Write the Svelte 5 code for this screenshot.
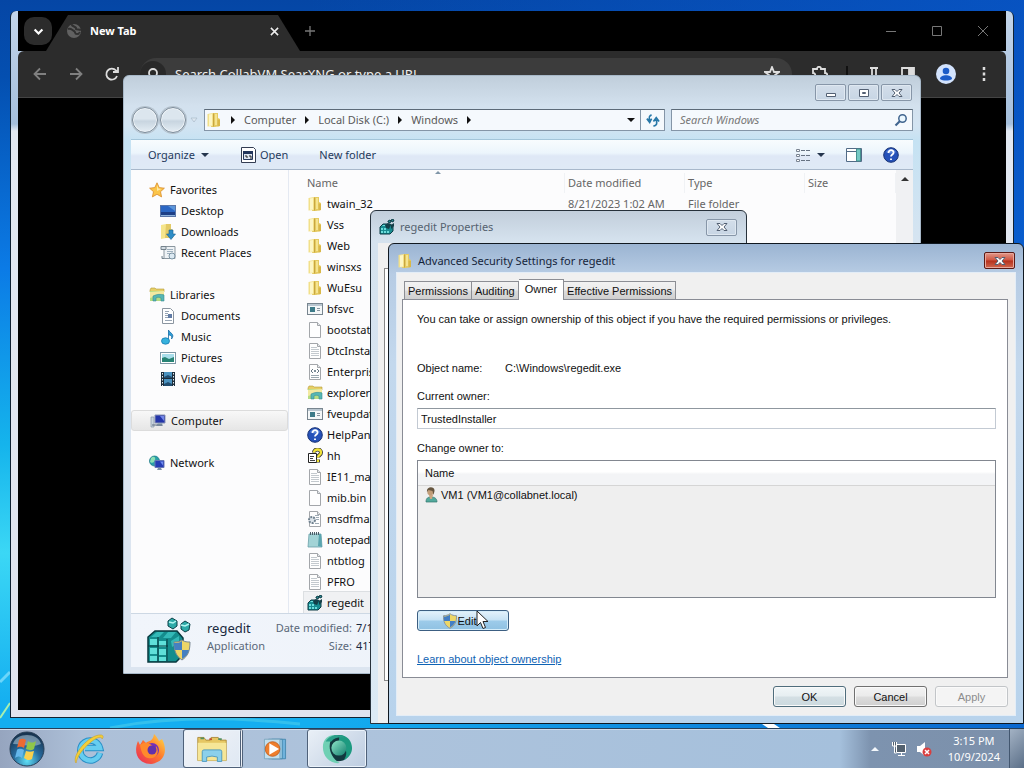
<script>
    let address = '';
    let search = '';
    let owner = 'TrustedInstaller';

    const crumbs = ['Computer', 'Local Disk (C:)', 'Windows'];

    const navGroups = [
        { name: 'Favorites', icon: 'star', items: [
            { name: 'Desktop', icon: 'desktop' },
            { name: 'Downloads', icon: 'downloads' },
            { name: 'Recent Places', icon: 'recent' }
        ]},
        { name: 'Libraries', icon: 'library', items: [
            { name: 'Documents', icon: 'document' },
            { name: 'Music', icon: 'music' },
            { name: 'Pictures', icon: 'pictures' },
            { name: 'Videos', icon: 'videos' }
        ]},
        { name: 'Computer', icon: 'computer', items: [], selected: true },
        { name: 'Network', icon: 'network', items: [] }
    ];

    const files = [
        { name: 'twain_32', icon: 'folder', date: '8/21/2023 1:02 AM', type: 'File folder' },
        { name: 'Vss', icon: 'folder' },
        { name: 'Web', icon: 'folder' },
        { name: 'winsxs', icon: 'folder' },
        { name: 'WuEsu', icon: 'folder' },
        { name: 'bfsvc', icon: 'app' },
        { name: 'bootstat', icon: 'blank' },
        { name: 'DtcInstall', icon: 'text' },
        { name: 'Enterprise', icon: 'xml' },
        { name: 'explorer', icon: 'library' },
        { name: 'fveupdate', icon: 'app' },
        { name: 'HelpPane', icon: 'help' },
        { name: 'hh', icon: 'hh' },
        { name: 'IE11_main', icon: 'text' },
        { name: 'mib.bin', icon: 'blank' },
        { name: 'msdfmap', icon: 'ini' },
        { name: 'notepad', icon: 'notepad' },
        { name: 'ntbtlog', icon: 'text' },
        { name: 'PFRO', icon: 'text' },
        { name: 'regedit', icon: 'regedit', selected: true }
    ];

    const tabs = ['Permissions', 'Auditing', 'Owner', 'Effective Permissions'];
    let activeTab = 'Owner';
</script>

{#snippet icon(name)}
    <svg class="icon" viewBox="0 0 16 16" aria-hidden="true">
        {#if name === 'folder'}
            <path d="M7 1h5v5l2 1v7l-5 1H5z" fill="#e5cb62"/>
            <path d="M1.500 2L7 1v13l-5.500.5z" fill="#f2e08a"/>
            <path d="M3 2.500l3-.5v11.500l-3 .5z" fill="#fdf6c4"/>
            <path d="M9 2h2v11H9z" fill="#f5e491"/>
            <path d="M11.500 7.500L14 8v6l-2.500.5z" fill="#d9b848"/>
            <path d="M7.500 1.500v13" stroke="#c8a63f"/>
        {:else if name === 'star'}
            <path d="M8 .8l2.200 4.800 5.200.6-3.900 3.500 1.100 5.200L8 12.300l-4.600 2.600 1.100-5.200L.6 6.200l5.200-.6z" fill="#fbc54a" stroke="#d98b2b" stroke-width=".8"/>
            <path d="M8 3l1.300 3.500 3 .5-4.300 2z" fill="#ffeaa5"/>
        {:else if name === 'desktop'}
            <rect x=".5" y="2.500" width="15" height="11" fill="#1d3f86" stroke="#5a76a8"/>
            <path d="M1 3h14v6H1z" fill="#2b67c4"/>
            <path d="M8 3h7v5z" fill="#5b95da"/>
            <path d="M1 12.500h14" stroke="#8eb2dc"/>
        {:else if name === 'downloads'}
            <path d="M1 1l5-1v14l-5 1z" fill="#f5e58c"/>
            <path d="M6 0h5v14H5z" fill="#e3ca66"/>
            <path d="M11 5l2 1v8h-2z" fill="#d5b64e"/>
            <path d="M9 6h4v4h2.500L11 15.500 6.500 10H9z" fill="#2e8dc7" stroke="#176292" stroke-width=".6"/>
        {:else if name === 'recent'}
            <path d="M4 1.500h11v12H4z" fill="#eef2f5" stroke="#8a969f"/>
            <path d="M1 1.500h5v3H1zM4 13.500H2V11" fill="#d3dce3" stroke="#75828c"/>
            <path d="M7 4.500h6M7 6.500h6M7 8.500h4" stroke="#9fb1bf"/>
            <circle cx="12" cy="11" r="3" fill="#dce9f2" stroke="#7b93a3"/>
        {:else if name === 'library'}
            <path d="M1 3l1-2h4l1 1h8v3H1z" fill="#e6cf67" stroke="#b59a3b" stroke-width=".6"/>
            <path d="M1 4h14v10H1z" fill="#b5dc84"/>
            <path d="M1 5l14-1v3L1 11z" fill="#f3e9a1"/>
            <path d="M4 14V9c4-2 8-2 11-1v6h-3v-3c-2-1-4-1-5 0v3z" fill="#56b6b4" stroke="#398f95" stroke-width=".6"/>
        {:else if name === 'document'}
            <path d="M2.500.5h8l3 3v12h-11z" fill="#fff" stroke="#8b95a0"/>
            <path d="M5 3.500h4M5 5.500h3M5 7.500h3M5 9.500h3M5 12.500h7" stroke="#98a5b4"/>
            <path d="M8 6h4v4H8z" fill="#617ba5"/>
        {:else if name === 'music'}
            <path d="M8.500 12V1c1 3 7 4 3 9 1-3-1-4-3-4" fill="#2f9fd7" stroke="#176ba5" stroke-width=".8"/>
            <ellipse cx="5.500" cy="12" rx="4" ry="3.200" fill="#36b2dd" stroke="#177ab1" stroke-width=".8"/>
        {:else if name === 'pictures'}
            <rect x=".5" y="2.500" width="15" height="11" fill="#fff" stroke="#7d97a5"/>
            <rect x="2" y="4" width="12" height="8" fill="#a8ddea"/>
            <path d="M2 8l3-1 4 2 5-2v5H2z" fill="#278374"/>
        {:else if name === 'videos'}
            <rect x="1" y="1" width="14" height="14" fill="#1d2d3b"/>
            <path d="M4 1h8v6H4zM4 8h8v7H4z" fill="#4b93c0"/>
            <path d="M4 6l4-2 4 2v1H4zM4 13l4-2 4 2v2H4z" fill="#214d70"/>
            <path d="M2.500 2v13M13.500 2v13" stroke="#e4edf3" stroke-dasharray="1.500 1.500"/>
        {:else if name === 'computer'}
            <path d="M1 4h3v10H1z" fill="#c9d4de" stroke="#8496a8" stroke-width=".7"/>
            <path d="M5 2h10v8H5z" fill="#2435a9" stroke="#8993b5"/>
            <path d="M10 3h4v5z" fill="#7386e8"/>
            <path d="M8 10h4l1 3H6z" fill="#95a7b8"/>
            <path d="M2 12h10" stroke="#5e6d80"/>
        {:else if name === 'network'}
            <circle cx="5.500" cy="6" r="5" fill="#289ea9" stroke="#167480" stroke-width=".7"/>
            <path d="M2 3c3-3 5 0 4 2s-2 4-5 2z" fill="#8cdfb4"/>
            <path d="M6 5.500h9v7H6z" fill="#253bb4" stroke="#6677b5"/>
            <path d="M11 6.500h3v4z" fill="#6f8bed"/>
            <path d="M9 13h3l1 2H8z" fill="#7f91a7"/>
        {:else if name === 'app'}
            <rect x=".5" y="2.500" width="15" height="11" fill="#f4f7f8" stroke="#78858f"/>
            <path d="M1 3h14v2H1z" fill="#b9c6d0"/>
            <path d="M3 6h5v5H3z" fill="#3d7b89"/>
            <path d="M10 7.500h3M10 9.500h3" stroke="#8794a0"/>
        {:else if name === 'blank' || name === 'text' || name === 'xml' || name === 'ini'}
            <path d="M2.500.5h8l3 3v12h-11z" fill="#fefefe" stroke="#a3a6aa"/>
            <path d="M10.500.5v3h3" fill="#e6e9ec" stroke="#a3a6aa"/>
            {#if name === 'text'}
                <path d="M4 4.500h6M4 6.500h8M4 8.500h8M4 10.500h8M4 12.500h8" stroke="#c3c9ce"/>
            {:else if name === 'xml'}
                <path d="M6 5L4 7l2 2M10 5l2 2-2 2" fill="none" stroke="#677681"/>
                <circle cx="8" cy="7" r="1" fill="#536a77"/>
                <path d="M4 11.500h8M4 13.500h8" stroke="#9aa7af"/>
            {:else if name === 'ini'}
                <path d="M8 4.500h4M9 6.500h3M9 8.500h3M8 12.500h4" stroke="#9eabb6"/>
                <circle cx="5" cy="9" r="3" fill="#dbe3e9" stroke="#70818f" stroke-width="2" stroke-dasharray="2 1"/>
            {/if}
        {:else if name === 'help'}
            <circle cx="8" cy="8" r="7.300" fill="#2551b9" stroke="#173275"/>
            <path d="M3 5c3-4 8-3 10 0-3 2-6 2-10 0z" fill="#7da5ea" opacity=".6"/>
            <path d="M5.500 6c0-4 5.500-3.500 5 0-.3 1.500-2.500 1.500-2.500 3.500M8 11.500v1.500" fill="none" stroke="#fff" stroke-width="1.800"/>
        {:else if name === 'hh'}
            <path d="M1.500 5.500h8v9h-8z" fill="#fff" stroke="#222"/>
            <path d="M3 8.500h4M3 10.500h3M3 12.500h5" stroke="#444"/>
            <path d="M7 4.500c0-4 7-4 7 0 0 3-3 2-3 5M11 11.500v3" fill="none" stroke="#333" stroke-width="4"/>
            <path d="M7 4.500c0-4 7-4 7 0 0 3-3 2-3 5M11 11.500v2.500" fill="none" stroke="#f2e436" stroke-width="2.300"/>
        {:else if name === 'notepad'}
            <path d="M2 2h12l1 13H1z" fill="#a2d3d6" stroke="#6ba0a8" stroke-width=".8"/>
            <path d="M12 2h2l1 13-4-1z" fill="#5aa5af"/>
            <path d="M3.500 0v3M5.500 0v3M7.500 0v3M9.500 0v3M11.500 0v3" stroke="#4b5e68"/>
        {:else if name === 'regedit'}
            <path d="M1 8l3-3h7l3 2v5l-3 3H1z" fill="#188c91" stroke="#0b3b45"/>
            <path d="M2 9h2v2H2zM5 9h2v2H5zM2 12h2v2H2zM5 12h2v2H5zM8 12h2v2H8z" fill="#6bdcdb"/>
            <path d="M4 6h3l-1 1H3z" fill="#6bdcdb"/>
            <path d="M6 6l3-2 3 2-2 4-3-1zM12 6l3-2v3l-3 3z" fill="#143f48"/>
            <path d="M9 2l2-1 1 1-1 2-2-1zM12 1l2-1 1 2-2 1z" fill="#2b8f95" stroke="#0b3b45"/>
        {:else if name === 'shield'}
            <path d="M8 .7c2 1.500 4 2 6.500 2 .2 6-1.500 10-6.500 12.600C3 12.700 1.300 8.700 1.500 2.700 4 2.700 6 2.200 8 .7z" fill="#ecd768" stroke="#8b979f"/>
            <path d="M8 1.500V8H2c-.3-1.300-.2-3 0-4.500 2.500 0 4-.5 6-2zM8 8h5.500c-.8 3-2.600 5-5.500 6.500z" fill="#437ec4"/>
        {:else if name === 'user'}
            <path d="M3 15c0-4 2-5 5-5s6 1 6 5z" fill="#52a99c" stroke="#32766f" stroke-width=".7"/>
            <path d="M6 8h4l-1 4H7z" fill="#caa680"/>
            <circle cx="7.500" cy="5" r="3.200" fill="#c19d78"/>
            <path d="M4 5c-1-6 8-6 7.500-1l-1 4-1-4-4-1z" fill="#665640"/>
        {/if}
    </svg>
{/snippet}

{#snippet glyph(kind)}
    <svg class="glyph" viewBox="0 0 12 10" aria-hidden="true">
        {#if kind === 'min'}
            <path d="M1.500 5.500h9v3h-9z"/>
        {:else if kind === 'max'}
            <path d="M1.500 1.500h9v7h-9zM4.500 4.500h3v1h-3z"/>
        {:else}
            <path d="M1 1.500h3l2 2 2-2h3L8 5l3 3.500H8l-2-2-2 2H1L4 5z"/>
        {/if}
    </svg>
{/snippet}

<div class="desktop">
    <main class="workspace">
        <svg class="wallpaper" viewBox="0 0 1024 728" preserveAspectRatio="none" aria-hidden="true">
            <path d="M0 718L10 703" stroke="#a8f0b0" stroke-width="2"/>
            <path d="M0 682L10 672" stroke="#8fe4ff" stroke-width="3" opacity=".7"/>
            <path d="M110 728Q190 712 300 724" fill="none" stroke="#65dbe8" stroke-width="3" opacity=".4"/>
            <path d="M762 724h12l6 4h-12z" fill="#fff"/>
        </svg>

        <!-- browser -->
        <section class="browser">
            <div class="tabstrip">
                <button class="tab-search" aria-label="Search tabs">
                    <svg viewBox="0 0 10 10"><path d="M2 3.500l3 3 3-3" fill="none" stroke="#fff" stroke-width="1.700"/></svg>
                </button>
                <div class="browser-tab">
                    <svg class="globe" viewBox="0 0 16 16" aria-hidden="true">
                        <circle cx="8" cy="8" r="7" fill="#616161"/>
                        <path d="M2 6c3-1 4 1 6 2s0 3 3 3 2-2 3-1M6 1c-1 3 5 2 4 5 1 1 3 0 5 1" fill="none" stroke="#303030" stroke-width="2"/>
                    </svg>
                    <span>New Tab</span>
                    <button aria-label="Close tab">
                        <svg viewBox="0 0 10 10"><path d="M1 1l8 8M9 1l-8 8" stroke="#eee" stroke-width="1.700"/></svg>
                    </button>
                </div>
                <button class="new-tab" aria-label="Add tab">
                    <svg viewBox="0 0 12 12"><path d="M6 1v10M1 6h10" stroke="#777" stroke-width="1.300"/></svg>
                </button>
                <div class="browser-controls">
                    <button aria-label="Minimize browser"><svg viewBox="0 0 12 12"><path d="M1 6.500h10"/></svg></button>
                    <button aria-label="Maximize browser"><svg viewBox="0 0 12 12"><path d="M1.500 1.500h9v9h-9z"/></svg></button>
                    <button aria-label="Close browser"><svg viewBox="0 0 12 12"><path d="M1 1l10 10M11 1L1 11"/></svg></button>
                </div>
            </div>
            <div class="browser-toolbar">
                <button class="dim" aria-label="Back"><svg viewBox="0 0 16 16"><path d="M14 8H3M8 2.500L2.500 8 8 13.500"/></svg></button>
                <button class="dim" aria-label="Forward"><svg viewBox="0 0 16 16"><path d="M2 8h11M8 2.500L13.500 8 8 13.500"/></svg></button>
                <button aria-label="Reload"><svg viewBox="0 0 16 16"><path d="M13 10a5.500 5.500 0 1 1-1-5.500L14 6M14 1v5H9"/></svg></button>
                <label class="omnibox">
                    <span class="lens"><svg viewBox="0 0 16 16"><circle cx="8" cy="7" r="4"/><path d="M11 10l4 4"/></svg></span>
                    <input bind:value={address} placeholder="Search CollabVM SearXNG or type a URL" aria-label="Address">
                    <svg viewBox="0 0 16 16"><path d="M8 1l2 5h5l-4 3 2 6-5-4-5 4 2-6-4-3h5z"/></svg>
                </label>
                <div class="extensions">
                    <svg viewBox="0 0 16 16"><path d="M1 3h4c0-3 4-3 4 0h4v4c3 0 3 4 0 4v4H1v-4c3 0 3-4 0-4z"/></svg>
                    <span class="rule"></span>
                    <svg viewBox="0 0 16 16"><path d="M4 2h8M6 2v7M10 2v7M4 10h8M8 10v5"/></svg>
                    <svg viewBox="0 0 16 16"><path d="M2 2h12v12H2z"/><path d="M9 3h4v10H9z" fill="#ddd"/></svg>
                </div>
                <button class="profile" aria-label="Profile">
                    <svg viewBox="0 0 20 20"><circle cx="10" cy="10" r="10" fill="#d3e3fd" stroke="none"/><circle cx="10" cy="7" r="3.300" fill="#1b5bc8" stroke="none"/><path d="M4 15c0-5 12-5 12 0-3 2-9 2-12 0z" fill="#1b5bc8" stroke="none"/></svg>
                </button>
                <button aria-label="Browser menu"><svg viewBox="0 0 16 16"><path d="M8 1v3M8 6.500v3M8 12v3" stroke-width="2.500"/></svg></button>
            </div>
            <div class="browser-page"></div>
        </section>

        <!-- file explorer -->
        <section class="explorer">
            <div class="explorer-title">
                <button class="caption" aria-label="Minimize">{@render glyph('min')}</button>
                <button class="caption" aria-label="Maximize">{@render glyph('max')}</button>
                <button class="caption" aria-label="Close">{@render glyph('close')}</button>
            </div>
            <div class="address-row">
                <div class="travel">
                    <button aria-label="Go back"></button>
                    <button aria-label="Go forward"></button>
                    <svg viewBox="0 0 8 6" aria-hidden="true"><path d="M1 1h6L4 5z" fill="#dde8f1" stroke="#a9bac8" stroke-width=".7"/></svg>
                </div>
                <nav class="crumbs">
                    {@render icon('folder')}
                    {#each crumbs as crumb}
                        <i class="arrow-right"></i>
                        <a href="#top">{crumb}</a>
                    {/each}
                    <i class="arrow-right"></i>
                    <i class="arrow-down"></i>
                    <button class="refresh" aria-label="Refresh">
                        <svg viewBox="0 0 16 16"><path d="M7 2C4 3 4 5 5 9M2 6l3 4 2-4M9 14c4-1 4-3 3-7M9 9l3-4 3 4" fill="none" stroke="#2878a8" stroke-width="1.800"/></svg>
                    </button>
                </nav>
                <label class="search">
                    <input bind:value={search} placeholder="Search Windows" aria-label="Search Windows">
                    <svg viewBox="0 0 14 14" aria-hidden="true"><circle cx="8.500" cy="5.500" r="3.700" fill="#eaf7ff" stroke="#40658f" stroke-width="1.500"/><path d="M6 8l-4.500 4.500" stroke="#40658f" stroke-width="2.200"/></svg>
                </label>
            </div>
            <div class="command-bar">
                <button>Organize <i class="arrow-down"></i></button>
                <button class="open">
                    <svg viewBox="0 0 16 16"><path d="M1.500.500h12l2 2v13h-14z" fill="#fff" stroke="#333d52"/><path d="M3.500 4.500h9v8h-9z" fill="#dde5f1" stroke="#23365c"/><path d="M3 4h10v3H3z" fill="#23365c"/><path d="M5 9h2v2M9 9h2v3" stroke="#222" fill="none"/></svg>
                    Open
                </button>
                <button>New folder</button>
                <div class="view-tools">
                    <button aria-label="Change view">
                        <svg viewBox="0 0 16 16"><path d="M1.500 2.500h3v2h-3zM1.500 7.500h3v2h-3zM1.500 12.500h3v2h-3z" fill="#fff" stroke="#7a8492"/><path d="M6 3.500h4M11 3.500h4M6 8.500h4M11 8.500h4M6 13.500h4M11 13.500h4" stroke="#667282"/></svg>
                        <i class="arrow-down"></i>
                    </button>
                    <button aria-label="Preview pane">
                        <svg viewBox="0 0 16 16"><path d="M.5 1.500h15v13H.5z" fill="#fff" stroke="#526b86"/><path d="M1 4.500h9" stroke="#526b86"/><path d="M10.500 2h4v12h-4z" fill="#75c9c4" stroke="#46918f"/></svg>
                    </button>
                    <button aria-label="Help">{@render icon('help')}</button>
                </div>
            </div>
            <div class="explorer-body">
                <nav class="tree">
                    {#each navGroups as group}
                        <div class="group">
                            <a href="#top" class="root" class:selected={group.selected}>{@render icon(group.icon)}{group.name}</a>
                            {#each group.items as item}
                                <a href="#top">{@render icon(item.icon)}{item.name}</a>
                            {/each}
                        </div>
                    {/each}
                </nav>
                <div class="file-list">
                    <table>
                        <thead>
                            <tr>
                                <th class="col-name">Name<i class="arrow-up sort"></i></th>
                                <th class="col-date">Date modified</th>
                                <th class="col-type">Type</th>
                                <th>Size</th>
                            </tr>
                        </thead>
                        <tbody>
                            {#each files as file}
                                <tr class:selected={file.selected}>
                                    <td><span class="file">{@render icon(file.icon)}{file.name}</span></td>
                                    <td>{file.date || ''}</td>
                                    <td>{file.type || ''}</td>
                                    <td></td>
                                </tr>
                            {/each}
                        </tbody>
                    </table>
                    <div class="scrollbar"><i class="arrow-up"></i></div>
                </div>
            </div>
            <footer class="details">
                <svg class="regedit-large" viewBox="0 0 44 46" aria-hidden="true">
                    <path d="M1 20l7-6h22l6 7v17l-7 7H1z" fill="#148d8d" stroke="#08393f" stroke-width="1.500"/>
                    <path d="M3 22h7v6H3zM12 24h7v6h-7zM3 31h7v6H3zM12 32h7v6h-7zM3 39h7v5H3zM12 40h7v4h-7z" fill="#5fdfd9"/>
                    <path d="M10 15h7l-5 5H4zM21 15h8l-5 6h-8zM24 24l8-5v7l-7 4z" fill="#33b9b7"/>
                    <path d="M1 29h20M11 20v25M20 22v22" stroke="#08393f"/>
                    <path d="M21 4l4-3 5 3v5l-4 3-5-3zM34 7l4-3 5 3-1 6-4 2-4-3z" fill="#2eaaa8" stroke="#0b4148"/>
                    <path d="M22 5l4 1 3-2M34 8l4 1 4-2" fill="none" stroke="#b2f6f1" stroke-width="1.500"/>
                    <path d="M35 23c3 2 5 2 8 2 0 9-2 14-8 18-6-4-8-9-8-18 3 0 5 0 8-2z" fill="#edd567" stroke="#798792"/>
                    <path d="M35 24v9h-7c-1-3-1-5-1-7 3 0 5 0 8-2zM35 33h7c-1 4-3 7-7 9z" fill="#4580c1"/>
                </svg>
                <div class="details-name">
                    <strong>regedit</strong>
                    <span>Application</span>
                </div>
                <dl>
                    <dt>Date modified:</dt><dd>7/13/2009</dd>
                    <dt>Size:</dt><dd>417 KB</dd>
                </dl>
            </footer>
        </section>

        <!-- file properties -->
        <section class="properties">
            <header>
                {@render icon('regedit')}
                <span>regedit Properties</span>
                <button class="caption" aria-label="Close properties">{@render glyph('close')}</button>
            </header>
            <div class="properties-body"><div class="sheet"></div></div>
        </section>

        <!-- advanced security -->
        <section class="security" role="dialog" aria-label="Advanced Security Settings for regedit">
            <header>
                {@render icon('folder')}
                <span>Advanced Security Settings for regedit</span>
                <button class="caption close" aria-label="Close dialog">{@render glyph('close')}</button>
            </header>
            <div class="security-body">
                <div class="tabs" role="tablist">
                    {#each tabs as tab}
                        <button role="tab" aria-selected={tab === activeTab} class:active={tab === activeTab}
                            on:click={() => activeTab = tab}>{tab}</button>
                    {/each}
                </div>
                <div class="panel">
                    <p>You can take or assign ownership of this object if you have the required permissions or privileges.</p>
                    <div class="object"><span>Object name:</span><span>C:\Windows\regedit.exe</span></div>
                    <label for="owner">Current owner:</label>
                    <input id="owner" readonly value={owner}>
                    <span id="owners-label">Change owner to:</span>
                    <div class="owners">
                        <table aria-labelledby="owners-label">
                            <thead><tr><th>Name</th></tr></thead>
                            <tbody><tr><td><span>{@render icon('user')}VM1 (VM1@collabnet.local)</span></td></tr></tbody>
                        </table>
                    </div>
                    <button class="edit">
                        {@render icon('shield')}Edit
                        <svg class="cursor" viewBox="0 0 13 20" aria-hidden="true"><path d="M1 1v15l3.500-3.500L7 18.500l2.500-1L7 11.500h5z" fill="#fff" stroke="#222"/></svg>
                    </button>
                    <a href="#top">Learn about object ownership</a>
                </div>
                <div class="actions">
                    <button class="default">OK</button>
                    <button>Cancel</button>
                    <button disabled>Apply</button>
                </div>
            </div>
        </section>
    </main>

    <footer class="taskbar">
        <button class="start" aria-label="Start">
            <svg viewBox="0 0 36 36">
                <defs>
                    <radialGradient id="orb" cx=".5" cy=".85" r=".8"><stop offset="0" stop-color="#5fe0f6"/><stop offset=".5" stop-color="#286a9c"/><stop offset="1" stop-color="#173450"/></radialGradient>
                </defs>
                <circle cx="18" cy="18" r="17" fill="url(#orb)" stroke="#283f57"/>
                <path d="M4 13C7 1 29 1 32 13c-9 4-19 0-28 0z" fill="#c2d8e5" opacity=".5"/>
                <path d="M10 9c3-2 5-1 7 0l-2 8c-2-1-5-2-7 0z" fill="#ec6a32"/>
                <path d="M19 10c3 2 5 2 8 0l-2 8c-3 2-5 1-8 0z" fill="#8fc64a"/>
                <path d="M8 19c2-2 5-1 7 0l-2 8c-2-2-4-2-7 0z" fill="#65b7eb"/>
                <path d="M17 20c3 1 5 1 8 0l-2 8c-3 2-5 1-8-1z" fill="#fbd04c"/>
            </svg>
        </button>
        <button class="task" aria-label="Internet Explorer">
            <svg viewBox="0 0 32 32">
                <path d="M27 20A10 10 0 1 1 27 15H12" fill="none" stroke="#2a8fc6" stroke-width="6.500"/>
                <path d="M27 20A10 10 0 1 1 27 15H12" fill="none" stroke="#66cdf0" stroke-width="4.500"/>
                <path d="M3 30C-2 23 16 1 28 2c2 0 3 2 1 4 0-3-5-2-11 3C9 16 4 24 3 30z" fill="#f3cf38" stroke="#cc9f25" stroke-width=".6"/>
            </svg>
        </button>
        <button class="task" aria-label="Firefox">
            <svg viewBox="0 0 32 32">
                <defs><linearGradient id="fox" x1="1" y1="0" x2="0" y2="1"><stop offset="0" stop-color="#ffe44b"/><stop offset=".45" stop-color="#ff7a2c"/><stop offset="1" stop-color="#e8255b"/></linearGradient></defs>
                <path d="M19 1c3 3 4 5 5 7l3-2c5 9 5 23-11 25C3 31-2 20 3 8l2 4 3-5 3 3c3-3 7-1 8-9z" fill="url(#fox)"/>
                <circle cx="17" cy="17" r="7" fill="#7430b9"/>
                <path d="M5 12c5-4 9-2 13 1-5-1-5 3-3 4 3 2 6-1 6-4 5 7-1 14-8 12-5-1-7-7-8-13z" fill="#ff8a2c"/>
                <circle cx="17" cy="17" r="4.500" fill="#6231ab"/>
            </svg>
        </button>
        <button class="task running stacked" aria-label="Windows Explorer">
            <svg viewBox="0 0 36 32">
                <path d="M2 3h7l2 3h5l1-3h8l2 3h7v23H2z" fill="#e6c763" stroke="#aa8a37"/>
                <path d="M5 4h4M25 5h4" stroke="#54905f" stroke-width="2"/>
                <path d="M15 5h3" stroke="#c2502f" stroke-width="2"/>
                <path d="M2 9h32v20H2z" fill="#f6e697"/>
                <path d="M7 30V19q0-2 2-2h18q2 0 2 2v11h-5v-5q-6-2-12 0v5z" fill="#8bd0eb" stroke="#4796bf"/>
            </svg>
        </button>
        <button class="task media" aria-label="Media Player">
            <svg viewBox="0 0 32 32">
                <path d="M12 4h17v24H12z" fill="#6fb2dc" stroke="#3f83aa"/>
                <path d="M8 4h17v24H8z" fill="#9ac9e2" stroke="#3f83aa"/>
                <path d="M3 4h19v24H3z" fill="#c3dfed" stroke="#75a1ba"/>
                <circle cx="13" cy="16" r="9" fill="#ef7e2c" stroke="#bf5b1c"/>
                <path d="M9 9l12 7-12 7z" fill="#fff"/>
            </svg>
        </button>
        <button class="task running" aria-label="Edge">
            <svg viewBox="0 0 34 34">
                <defs><linearGradient id="swirl" x1="0" y1="0" x2="1" y2="1"><stop offset="0" stop-color="#8ee6c8"/><stop offset="1" stop-color="#14806f"/></linearGradient></defs>
                <circle cx="18" cy="16" r="14" fill="#12393f"/>
                <path d="M20 2c8 0 13 7 13 14 0 6-4 11-9 13 4-5 4-12-1-15-3-2-5-6-3-12z" fill="#1d9a80"/>
                <path d="M2 15C2 6 8 2 14 2 6 10 8 25 20 32 9 33 2 25 2 15z" fill="#6fd0b4"/>
                <path d="M5 9c4-7 14-9 20-4-5-1-11 0-14 4z" fill="#2aa08a"/>
                <circle cx="19" cy="16" r="8" fill="url(#swirl)"/>
            </svg>
        </button>
        <div class="tray">
            <i class="arrow-up"></i>
            <svg viewBox="0 0 16 16" aria-hidden="true"><path d="M5.500 3.500h9v8h-9zM7 14.500h7M10.500 12v2M1.500 1v4h4V1M3.500 1v11h2" fill="#53616f" stroke="#fff"/></svg>
            <svg viewBox="0 0 16 16" aria-hidden="true"><path d="M1 5h3l5-4v14l-5-4H1z" fill="#fff"/><circle cx="11" cy="11" r="4.500" fill="#d93e3e"/><path d="M9 9l4 4M13 9l-4 4" stroke="#fff" stroke-width="1.500"/></svg>
            <time><span>3:15 PM</span><span>10/9/2024</span></time>
        </div>
        <button class="show-desktop" aria-label="Show desktop"></button>
    </footer>
</div>

<style>
    :global(body) {
        margin: 0;
    }

    .desktop {
        height: 100vh;
        display: flex;
        flex-direction: column;
        overflow: hidden;
        font: 11px/16px "Noto Sans", "Open Sans", sans-serif;
        color: #111;
        background:
            linear-gradient(90deg, transparent 30%, rgba(8, 86, 200, .8)),
            linear-gradient(#0546a5 0, #044fb0 10%, #0b7be6 35%, #15b4ec 58%, #3bd7f5 72%, #14aef0 92%);
    }
    .workspace {
        position: relative;
        flex: 1;
        min-height: 0;
    }
    .wallpaper {
        width: 100%;
        height: 100%;
    }
    .wallpaper,
    .browser,
    .explorer,
    .properties,
    .security {
        position: absolute;
        box-sizing: border-box;
    }
    section {
        display: flex;
        flex-direction: column;
    }

    button,
    input {
        margin: 0;
        padding: 0;
        border: 0;
        background: none;
        font: inherit;
        color: inherit;
        outline: none;
    }
    button {
        display: flex;
        align-items: center;
        justify-content: center;
    }
    svg {
        display: block;
        flex: none;
    }
    .icon {
        width: 16px;
        height: 16px;
    }
    .arrow-right,
    .arrow-down,
    .arrow-up {
        display: inline-block;
        border: 4px solid transparent;
    }
    .arrow-right {
        border-left-color: #111;
        border-right: 0;
    }
    .arrow-down {
        border-top-color: #25354d;
        border-bottom: 0;
    }
    .arrow-up {
        border-bottom-color: #333;
        border-top: 0;
    }

    /* browser */
    .browser {
        inset: 11px 10px 10px;
        border: 1px solid #123;
        border-top: 0;
        border-radius: 6px 6px 0 0;
        background: linear-gradient(#c3d5ea 0, #a5bfdc 16%, #e2e9f2 17%, #dfe3ee 100%);
        padding: 0 7px 7px;
    }
    .tabstrip {
        display: flex;
        align-items: center;
        height: 40px;
        background: #000;
    }
    .tab-search {
        width: 28px;
        height: 28px;
        margin-left: 6px;
        border-radius: 10px;
        background: #2c2c2c;
    }
    .tab-search svg {
        width: 13px;
    }
    .browser-tab {
        box-sizing: border-box;
        display: flex;
        align-items: center;
        align-self: flex-end;
        width: 254px;
        height: 36px;
        margin-left: -6px;
        padding: 0 21px 4px 20px;
        background: #2c2c2c;
        clip-path: polygon(22px 0, 232px 0, 254px 100%, 0 100%);
        color: #fff;
        font-weight: bold;
    }
    .globe {
        width: 16px;
        margin-right: 8px;
    }
    .browser-tab button {
        margin-left: auto;
    }
    .browser-tab button svg {
        width: 9px;
    }
    .new-tab svg {
        width: 12px;
        margin-left: 4px;
    }
    .browser-controls {
        display: flex;
        gap: 34px;
        margin-left: auto;
        margin-right: 17px;
    }
    .browser-controls svg {
        width: 12px;
        fill: none;
        stroke: #777;
    }
    .browser-toolbar {
        display: flex;
        align-items: center;
        gap: 20px;
        height: 46px;
        padding: 0 14px;
        border-bottom: 1px solid #444;
        border-radius: 6px 6px 0 0;
        background: #2c2c2c;
    }
    .browser-toolbar svg {
        width: 16px;
        fill: none;
        stroke: #ddd;
        stroke-width: 1.8;
    }
    .browser-toolbar .dim svg {
        stroke: #808080;
    }
    .omnibox {
        display: flex;
        align-items: center;
        flex: 1;
        height: 32px;
        padding: 0 12px 0 0;
        border-radius: 16px;
        background: #3c3c3c;
    }
    .lens {
        padding: 5px;
        border-radius: 13px;
        background: #292929;
    }
    .omnibox input {
        flex: 1;
        padding-left: 9px;
        color: #eee;
        font-size: 13px;
    }
    .omnibox input::placeholder {
        color: #eee;
        opacity: 1;
    }
    .extensions {
        display: flex;
        gap: 18px;
    }
    .rule {
        width: 2px;
        background: #111;
    }
    .browser-toolbar .profile svg {
        width: 20px;
    }
    .browser-page {
        flex: 1;
        background: #000;
    }

    /* window caption buttons */
    .caption {
        box-sizing: border-box;
        width: 31px;
        height: 17px;
        border: 1px solid #8796a8;
        border-radius: 2px;
        background: linear-gradient(#d3deea, #c7d5e4);
        box-shadow: inset 0 0 0 1px #dfe8f1;
    }
    .glyph {
        width: 12px;
        height: 10px;
        fill: #fff;
        stroke: #536073;
    }

    /* explorer */
    .explorer {
        top: 75px;
        left: 123px;
        width: 798px;
        padding: 0 7px 6px;
        border: 1px solid #a7b8c8;
        border-radius: 6px 6px 0 0;
        background: linear-gradient(#c0cedb 0, #d3e1ee 30px, #d3e4f2 50px, #c5e2f3 65px, #dce5f0 200px);
    }
    .explorer-title {
        display: flex;
        justify-content: flex-end;
        gap: 2px;
        height: 17px;
        padding: 8px 1px 0 0;
    }
    .address-row {
        display: flex;
        align-items: center;
        height: 38px;
        gap: 6px;
    }
    .travel {
        display: flex;
        align-items: center;
        gap: 2px;
        padding-left: 1px;
    }
    .travel button {
        box-sizing: border-box;
        width: 26px;
        height: 26px;
        border: 1px solid #7d8b98;
        border-radius: 13px;
        background: linear-gradient(#dce6ee 45%, #c8d5e0 55%, #e4edf4);
        box-shadow: inset 0 0 0 1px #eef3f7, 0 0 0 1px #b5c2cd;
    }
    .travel svg {
        width: 8px;
        margin-left: 2px;
    }
    .crumbs,
    .search {
        box-sizing: border-box;
        display: flex;
        align-items: center;
        height: 22px;
        border: 1px solid #8495a7;
        border-top-color: #5c6a78;
        background: #f5f9fd;
        color: #555;
    }
    .crumbs {
        flex: 1;
        padding-left: 1px;
        gap: 9px;
    }
    .crumbs a {
        color: #5a5a5a;
        text-decoration: none;
    }
    .crumbs .arrow-down {
        margin-left: auto;
        margin-right: -4px;
        border-top-color: #111;
    }
    .refresh {
        width: 24px;
        height: 20px;
        border-left: 1px solid #8495a7;
    }
    .refresh svg {
        width: 15px;
    }
    .search {
        width: 242px;
        padding: 0 4px 0 8px;
    }
    .search input {
        flex: 1;
        min-width: 0;
    }
    .search input::placeholder {
        color: #777;
        font-style: italic;
        opacity: 1;
    }
    .search svg {
        width: 14px;
    }
    .command-bar {
        display: flex;
        align-items: center;
        height: 29px;
        padding: 0 14px 0 17px;
        gap: 31px;
        border-top: 1px solid #a3c5da;
        border-bottom: 1px solid #a8b8cb;
        background: linear-gradient(#f8fcfe, #ecf5fc 45%, #dfe8f6 55%, #dfeaf6);
        color: #263b5c;
    }
    .command-bar button {
        gap: 6px;
    }
    .command-bar .open {
        gap: 4px;
    }
    .command-bar svg {
        width: 16px;
    }
    .view-tools {
        display: flex;
        gap: 21px;
        margin-left: auto;
    }
    .explorer-body {
        display: flex;
        height: 443px;
        background: #fcfcfd;
    }
    .tree {
        box-sizing: border-box;
        width: 158px;
        padding: 9px 0 0;
        border-right: 1px solid #e4e9f2;
    }
    .group {
        margin-bottom: 21px;
    }
    .tree a {
        display: flex;
        align-items: center;
        gap: 5px;
        box-sizing: border-box;
        height: 21px;
        padding-left: 29px;
        color: #111;
        text-decoration: none;
    }
    .tree .root {
        padding-left: 18px;
    }
    .tree .root.selected {
        border: 1px solid #dcdcdc;
        border-radius: 3px;
        background: linear-gradient(#f8f8f8, #e6e6e6);
    }
    .file-list {
        display: flex;
        flex: 1;
        overflow: hidden;
    }
    .file-list table {
        flex: 1;
        table-layout: fixed;
        width: 100%;
        margin: 3px 0 0 15px;
        border-collapse: collapse;
    }
    .file-list th,
    .file-list td {
        padding: 0 0 0 3px;
        text-align: left;
        font-weight: normal;
        color: #666;
        white-space: nowrap;
    }
    .file-list th {
        position: relative;
        height: 20px;
        box-shadow: inset -1px 0 #f0f2f5;
    }
    .file-list td {
        height: 21px;
    }
    .file-list .sort {
        position: absolute;
        top: -2px;
        left: 50%;
        border-width: 0 3px 3px;
        border-bottom-color: #8096a8;
    }
    .col-name {
        width: 258px;
    }
    .col-date,
    .col-type {
        width: 117px;
    }
    .file {
        display: flex;
        align-items: center;
        gap: 4px;
        color: #111;
    }
    tr.selected {
        background: #f0f1f3;
        outline: 1px solid #dcdfe2;
    }
    .scrollbar {
        width: 17px;
        background: #f0f1f3;
        text-align: center;
        line-height: 14px;
    }
    .details {
        box-sizing: border-box;
        display: flex;
        height: 54px;
        padding: 3px 16px;
        border-top: 1px solid #cdd8e4;
        background: linear-gradient(90deg, #f1f5fb, #eaf0f8);
        color: #5a6879;
    }
    .regedit-large {
        width: 44px;
        height: 46px;
    }
    .details-name {
        width: 67px;
        margin-left: 16px;
    }
    .details-name strong,
    .details-name span {
        display: block;
        line-height: 18px;
    }
    .details strong {
        padding-top: 2px;
        font-weight: normal;
        font-size: 13px;
        color: #1a2940;
    }
    dl {
        display: grid;
        grid-template-columns: 78px auto;
        column-gap: 4px;
        align-content: start;
        margin: 2px 0 0;
        line-height: 18px;
    }
    dt {
        text-align: right;
        white-space: nowrap;
    }
    dd {
        margin: 0;
        color: #1a2940;
        white-space: nowrap;
    }

    /* properties */
    .properties {
        top: 210px;
        bottom: 4px;
        left: 370px;
        width: 377px;
        padding: 0 7px;
        border: 1px solid #27313b;
        border-radius: 6px 6px 0 0;
        background: linear-gradient(#c2cedb 0, #d5e2ee 30px, #dceaf5);
        color: #566270;
    }
    header {
        display: flex;
        align-items: center;
        flex: none;
    }
    .properties header {
        height: 32px;
        gap: 5px;
        padding: 0 2px 0 1px;
    }
    header .caption {
        margin-left: auto;
    }
    .properties-body {
        flex: 1;
        padding: 25px 6px 44px;
        background: #f0f0f0;
    }
    .sheet {
        height: 100%;
        border: 1px solid #888;
        background: #fff;
    }

    /* advanced security dialog */
    .security {
        top: 243px;
        right: 0;
        bottom: 4px;
        left: 388px;
        padding: 0 7px 7px;
        border: 1px solid #101820;
        border-radius: 6px 6px 0 0;
        background: linear-gradient(#9bb4d2, #b7cce4 30px, #c3d8ed 120px, #b8d3ec);
    }
    .security header {
        height: 28px;
        padding: 5px 1px 0;
        box-sizing: border-box;
        gap: 5px;
        color: #15243a;
    }
    .security .close {
        border-color: #5b1a15;
        background: linear-gradient(#e2988a, #cf5541 48%, #b5301c 52%, #d0684f);
        box-shadow: inset 0 0 0 1px #e8a89d;
    }
    .security-body {
        flex: 1;
        display: flex;
        flex-direction: column;
        padding: 7px 7px 8px 5px;
        border: 1px solid #e3edf7;
        background: #f0f0f0;
        font: 11px/16px "Liberation Sans", Arial, sans-serif;
    }
    .tabs {
        display: flex;
        align-items: flex-end;
        height: 19px;
        padding-left: 2px;
    }
    .tabs button {
        height: 18px;
        box-sizing: border-box;
        padding: 0 3px;
        border: 1px solid #8c8e94;
        border-bottom: 0;
        border-left-width: 0;
        background: linear-gradient(#f2f2f2, #ebebeb 48%, #dcdcdc 52%, #cfcfcf);
    }
    .tabs button:first-child {
        border-left-width: 1px;
    }
    .tabs .active {
        position: relative;
        height: 21px;
        margin-bottom: -1px;
        padding: 0 6px 2px;
        background: #fff;
    }
    .panel {
        display: flex;
        flex-direction: column;
        align-items: stretch;
        flex: 1;
        padding: 11px 11px 10px 14px;
        border: 1px solid #898c95;
        background: #fff;
    }
    .panel p {
        margin: 0 0 33px;
    }
    .object {
        display: flex;
        margin-bottom: 12px;
    }
    .object span:first-child {
        width: 88px;
    }
    .panel input {
        box-sizing: border-box;
        height: 21px;
        margin: 4px 0 11px;
        padding: 0 3px;
        border: 1px solid #c3cad3;
        border-top-color: #8f979f;
    }
    .owners {
        flex: 1;
        margin-top: 4px;
        border: 1px solid #828790;
        background: #efefef;
    }
    .owners table {
        width: 100%;
        border-collapse: collapse;
    }
    .owners th {
        height: 24px;
        padding: 0 7px;
        border-bottom: 1px solid #d5d5d5;
        background: linear-gradient(#fff 45%, #f3f4f6 55%);
        text-align: left;
        font-weight: normal;
    }
    .owners td {
        padding: 1px 5px;
    }
    .owners td span {
        display: flex;
        gap: 2px;
    }
    .edit,
    .actions button {
        box-sizing: border-box;
        height: 21px;
        border: 1px solid #707070;
        border-radius: 3px;
        background: linear-gradient(#f3f3f3, #ebebeb 48%, #dddddd 52%, #cfcfcf);
        box-shadow: inset 0 0 0 1px #fafafa;
    }
    .edit {
        position: relative;
        width: 92px;
        margin: 12px 0 20px;
        padding-right: 8px;
        border-color: #3c5f82;
        background: linear-gradient(#e4f2fb, #c6e2f4 48%, #9dcbea 52%, #8fc1e2);
        box-shadow: inset 0 0 0 1px #d5edfa;
    }
    .cursor {
        position: absolute;
        top: -1px;
        left: 58px;
        width: 13px;
        height: 20px;
    }
    .panel a {
        align-self: flex-start;
        color: #0f63b4;
    }
    .actions {
        display: flex;
        justify-content: flex-end;
        gap: 8px;
        padding-top: 8px;
    }
    .actions button {
        width: 73px;
    }
    .actions .default {
        background: linear-gradient(#f1f6f8, #e6eef1 48%, #d4dfe4 52%, #cbd9de);
        border-color: #4f6d7c;
    }
    .actions button:disabled {
        border-color: #c2c5c8;
        background: #f4f4f4;
        color: #8c8c8c;
    }

    /* taskbar */
    .taskbar {
        display: flex;
        box-sizing: border-box;
        height: 40px;
        border-top: 1px solid #263f5a;
        background: linear-gradient(90deg, #96a5bf, #adc0d8 8%, #adc3dc 35%, #a5c0dc 82%, #7d93af 85%, #7c90aa);
        box-shadow: inset 0 1px #cfdcec;
    }
    .start {
        width: 54px;
    }
    .start svg {
        width: 36px;
    }
    .task {
        box-sizing: border-box;
        width: 60px;
        margin-right: 2px;
    }
    .task svg {
        width: 32px;
        height: 32px;
    }
    .task.media svg {
        width: 26px;
        height: 26px;
    }
    .start + .task {
        margin-left: 5px;
    }
    .task.running {
        border: 1px solid #4f6179;
        border-radius: 3px;
        background: linear-gradient(135deg, #eaf0f7, #bccce0);
        box-shadow: inset 0 0 0 1px #eaf2fa;
    }
    .task.stacked {
        border-right-width: 3px;
        border-right-style: double;
        background: linear-gradient(135deg, #f2f4f8, #dfe8f3);
    }
    .tray {
        display: flex;
        align-items: center;
        gap: 9px;
        margin-left: auto;
        margin-right: 9px;
        color: #fff;
    }
    .tray .arrow-up {
        border-bottom-color: #f3f7fb;
        margin-right: 3px;
    }
    .tray svg {
        width: 16px;
    }
    time {
        margin-left: 7px;
        text-align: center;
    }
    time span {
        display: block;
    }
    .show-desktop {
        width: 15px;
        border-left: 1px solid #42566f;
        background: linear-gradient(135deg, #a3b2c4, #5b6f88);
    }
</style>
